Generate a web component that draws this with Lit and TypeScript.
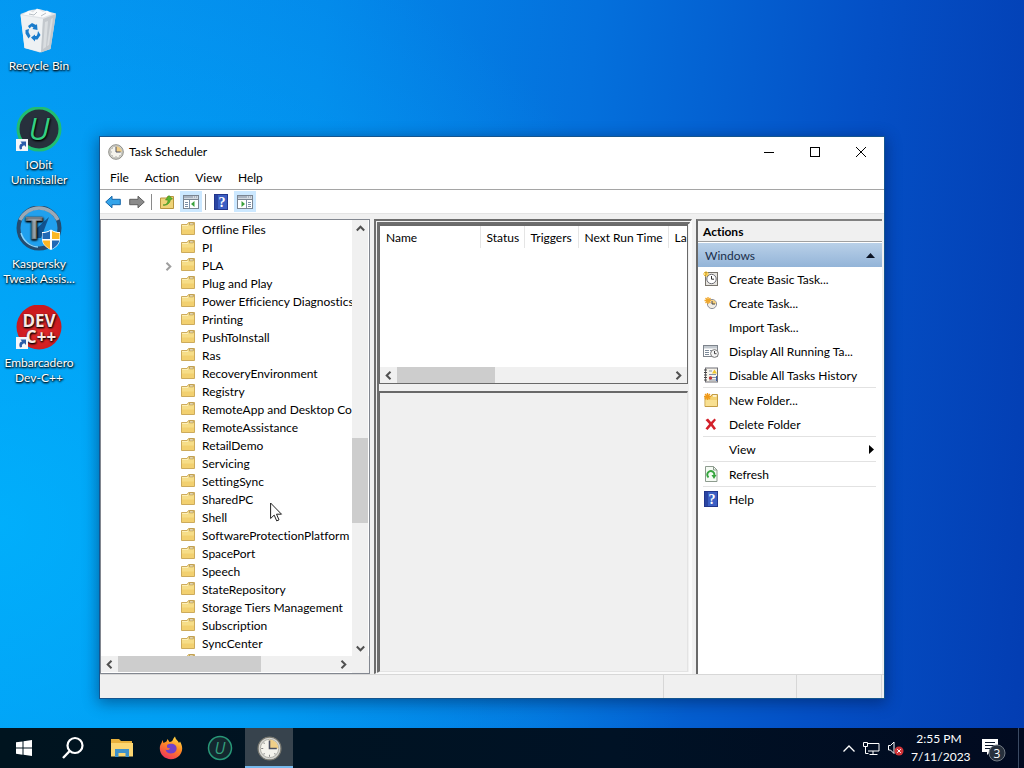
import { LitElement, html, css, svg, nothing, TemplateResult } from "lit";
import { customElement, property } from "lit/decorators.js";
import { classMap } from "lit/directives/class-map.js";

const arrow = (d: string) => html`<svg width="9" height="9" viewBox="0 0 9 9" aria-hidden="true"><path d=${d} fill="none" stroke="#505050" stroke-width="2"/></svg>`;
const LEFT = "M6.5 .8L2.7 4.5L6.5 8.2", RIGHT = "M2.5 .8L6.3 4.5L2.5 8.2", UP = "M.8 6.5L4.5 2.7L8.2 6.5", DOWN = "M.8 2.5L4.5 6.3L8.2 2.5";

const folder = (w = 16) => html`<svg width=${w} height=${w} viewBox="0 0 16 16" aria-hidden="true">
  <path d="M1.500 3.500H7l1.500-2h6v12h-13z" fill="#f6dd88" stroke="#cdab5c"/>
  <path d="M2 8.500h12V13H2z" fill="#f2d070"/><path d="M2 4.500h6" stroke="#fcefb8"/>
  <path d="M9.500 2h3.800v1.800H9.500z" fill="#fffbe8" stroke="#a98a42" stroke-width=".7"/></svg>`;

const clock = (s: number) => html`<svg width=${s} height=${s} viewBox="0 0 24 24" aria-hidden="true">
  <circle cx="12" cy="12" r="11" fill="#d4d4d0" stroke="#77776f" stroke-width="1.2"/>
  <circle cx="12" cy="12" r="8.8" fill="#f4f3ec" stroke="#a5a59c" stroke-width=".8"/>
  <path d="M12 12V3.4A8.6 8.6 0 0 1 20.6 12z" fill="#f0cf88"/>
  <path d="M12 4.2V12h7" fill="none" stroke="#4a4f60" stroke-width="1.5"/>
  <path d="M12 18v2M4 12h2M6.3 6.3l1 1M6.3 17.7l1-1M17.7 17.7l-1-1" stroke="#888" stroke-width="1"/></svg>`;

const help = html`<svg width="14" height="16" viewBox="0 0 14 16" aria-hidden="true">
  <rect x=".5" y=".5" width="13" height="15" fill="#3c5fc4" stroke="#22368c"/><path d="M1 1h3v14H1z" fill="#2a45a2"/>
  <text x="8" y="13" text-anchor="middle" font-family="Liberation Serif, serif" font-weight="bold" font-size="14" fill="#fff">?</text></svg>`;

const pane = (right: boolean) => html`<svg width="16" height="16" viewBox="0 0 16 16" aria-hidden="true">
  <rect x=".5" y="1.5" width="15" height="13" fill="#fff" stroke="#7b8592"/>
  <path d="M1 2h14v2.5H1z" fill="#a9b4c2"/><path d="M10 3h1M12 3h1M14 3h1" stroke="#fff"/>
  <path d="M1 5.5h14" stroke="#7b8592"/>
  ${right
    ? svg`<path d="M9.5 6v8M11 8.500h3M11 10.500h3M11 12.500h3" stroke="#7b8fa8"/><path d="M4.500 7l3.500 3-3.500 3z" fill="#39a13b"/>`
    : svg`<path d="M6.500 6v8M2 8.500h3M2 10.500h3M2 12.500h3" stroke="#7b8fa8"/><path d="M11.500 7L8 10l3.500 3z" fill="#39a13b"/>`}</svg>`;

const shortcut = svg`<rect x="0" y="32" width="12" height="12" fill="#f4f6fa"/>
  <path d="M4 42.500C2.500 39 4 36.800 6 36.500L4.500 34.500H10V40L8.300 38.300C6.500 38.500 5.500 40 6 42z" fill="#2a5caa"/>`;

const desktopArt: Record<string, TemplateResult> = {
  bin: html`<svg width="46" height="46" viewBox="0 0 46 46" aria-hidden="true">
    <path d="M4.500 6L15 2l8-1 17 4.500L34.500 41 24 44.500 8.500 40z" fill="#dfe3e7"/>
    <path d="M4.500 7L27 11l-2 33L8.500 40z" fill="#eef1f3"/><path d="M27 11l13-5-5.500 35L25 44.500z" fill="#c3c8cd"/>
    <path d="M29 14l3-1-2 26-3 2zM35 11l2-1-4 27-2 1z" fill="#d9dde0"/>
    <path d="M7 6.500l6-4 4 2 4-4 6 3.500 4-1.500 5 3.500-9 3.500z" fill="#fafbfc"/><path d="M13 6l5 1 3-3M25 8l5-3" stroke="#b9c0c6" fill="none"/>
    <g fill="#1b7ccc"><path d="M12 18l4-3 4 2 1-1 .5 6-5-1 1-1.500-2-1-2 2z"/><path d="M9.500 22l3.500-1-.5 3 2 4-2 2.500-3-5z"/><path d="M22 23l2.500 4-3 4.500h-2.500v2l-4-4 4-3v1.500h1.500l1-2z"/></g></svg>`,
  iobit: html`<svg width="46" height="46" viewBox="0 0 46 46" aria-hidden="true">
    <circle cx="23" cy="22" r="21" fill="#27303c"/><circle cx="23" cy="22" r="21" fill="none" stroke="#21bd72" stroke-width="3"/>
    <text x="23" y="33" text-anchor="middle" font-family="Open Sans, sans-serif" font-style="italic" font-size="31" fill="#34cf83">U</text>${shortcut}</svg>`,
  kaspersky: html`<svg width="46" height="46" viewBox="0 0 46 46" aria-hidden="true">
    <circle cx="23" cy="22" r="20.500" fill="#20a0ee" stroke="#244c70" stroke-width="4"/>
    <path d="M4 14A21 21 0 0 1 42 14" fill="none" stroke="#9aa9b6" stroke-width="3.500"/>
    <path d="M5 27A19 19 0 0 0 22 41" fill="none" stroke="#87d5ff" stroke-width="1.500"/>
    <path d="M33 11L25 32H17L21 22z" fill="#12538f"/>
    <text x="18" y="33" text-anchor="middle" font-family="Open Sans, sans-serif" font-weight="bold" font-size="30" fill="#a7b4bf" stroke="#6d7c89" stroke-width=".5">T</text>
    <path d="M35 23.500c-3 2-6 2.500-9 2.500v7c0 6 5 9 9 11 4-2 9-5 9-11v-7c-3 0-6-.5-9-2.500z" fill="#fff"/>
    <path d="M34 25v8h-7.500v-6c3 0 5-.5 7.500-2zM36 34.500h7.300c-.7 4-4 6.500-7.300 8.500z" fill="#2268b4"/>
    <path d="M36 25c2.500 1.500 5 2 7.500 2v6H36zM34 34.500v8.500c-3.300-2-6.800-4.500-7.300-8.500z" fill="#fbb725"/></svg>`,
  dev: html`<svg width="46" height="46" viewBox="0 0 46 46" aria-hidden="true">
    <defs><radialGradient id="r" cx="50%" cy="60%"><stop offset="0" stop-color="#e52b2b"/><stop offset="1" stop-color="#c91a1f"/></radialGradient></defs>
    <circle cx="23" cy="22" r="22.500" fill="url(#r)"/>
    <g font-family="Open Sans, sans-serif" font-weight="bold" font-size="17" fill="#fbe9e4" text-anchor="middle"><text x="23" y="22">DEV</text><text x="25" y="38">C++</text></g>${shortcut}</svg>`,
};

const actionArt: Record<string, TemplateResult> = {
  basic: html`<svg width="16" height="16" viewBox="0 0 16 16" aria-hidden="true"><rect x="2.500" y="1.500" width="12" height="13" fill="#e6e4df" stroke="#77736c"/>
    <circle cx="8.500" cy="8" r="4.700" fill="#fff" stroke="#6c6c75"/><path d="M8.500 5v3.200H11" fill="none" stroke="#333"/><path d="M3 0v6M0 3h6M1 1l4 4M5 1L1 5" stroke="#f1bd2d"/></svg>`,
  create: html`<svg width="16" height="16" viewBox="0 0 16 16" aria-hidden="true"><circle cx="9" cy="9" r="4.600" fill="#f2eee5" stroke="#8c8f99"/>
    <path d="M9 9V5a4 4 0 0 1 4 4z" fill="#f5cf7b"/><path d="M9 6v3h3" fill="none" stroke="#444"/><path d="M5 2v7M1.500 5.500h7M2.500 3l5 5M7.500 3l-5 5" stroke="#f0a72b" stroke-width="1.300"/></svg>`,
  display: html`<svg width="16" height="16" viewBox="0 0 16 16" aria-hidden="true"><rect x=".5" y="2.500" width="14" height="11" fill="#fff" stroke="#7d838b"/>
    <path d="M1 3h13v2.500H1z" fill="#c3c9cf"/><path d="M2 7.500h4M2 9.500h4M2 11.500h4M7 7.500h2" stroke="#7d8b9a"/><circle cx="11.500" cy="10.500" r="3.900" fill="#f5f5f5" stroke="#777"/><path d="M11.500 8v2.700h2" fill="none" stroke="#444"/></svg>`,
  history: html`<svg width="16" height="16" viewBox="0 0 16 16" aria-hidden="true"><rect x="2.500" y="1" width="12" height="14" fill="#f7f4ec" stroke="#6f6f76"/>
    <path d="M1 3h3M1 5.500h3M1 8h3M1 10.500h3M1 13h3" stroke="#444"/><path d="M6 4h3M6 7.500h7M6 10.500h7M6 13h7" stroke="#8592a3"/><path d="M11.500 2.500l2.500 4H9z" fill="#efc72c"/><circle cx="7.500" cy="11" r="1.700" fill="#c03a3a"/><path d="M13.500 9v5" stroke="#3b5faa"/></svg>`,
  folder: html`<svg width="16" height="16" viewBox="0 0 16 16" aria-hidden="true"><path d="M2 4.500h6l1-2h5.500v12H2z" fill="#f3d272" stroke="#c39c45"/><path d="M2.500 8H14v6H2.500z" fill="#f8e092"/><path d="M10 3.200h3.500v1.500H10z" fill="#fffbe8"/>
    <path d="M4.500 1v7M1 4.500h7M2 2l5 5M7 2L2 7" stroke="#f09a1a" stroke-width="1.400"/></svg>`,
  del: html`<svg width="16" height="16" viewBox="0 0 16 16" aria-hidden="true"><path d="M2.500 4l2.500-1.500 3 3.500 3.500-3.500L13 4 9.700 8l3.300 4.500-2 1.500-3-4-3.500 4L2.500 12.500 6.200 8z" fill="#d3202a"/></svg>`,
  refresh: html`<svg width="16" height="16" viewBox="0 0 16 16" aria-hidden="true"><path d="M2.500 .5h8l3.500 3.500v11.500H2.500z" fill="#f5fbf4" stroke="#8d9b8e"/><path d="M10.500 .5V4H14" fill="none" stroke="#8d9b8e"/>
    <path d="M5.500 11.500A3.600 3.600 0 1 1 11.400 9" fill="none" stroke="#36a53f" stroke-width="2"/><path d="M8.500 9h5l-2.500 4z" fill="#36a53f"/></svg>`,
  help,
};

@customElement("scroll-bar")
export class ScrollBar extends LitElement {
  @property({ type: Boolean, reflect: true }) vertical = false;
  @property({ type: Number }) start = 0;
  @property({ type: Number }) size = 50;
  static styles = css`
    :host { display: flex; background: #f0f0f0; height: 16px; min-width: 0; }
    :host([vertical]) { flex-direction: column; width: 16px; height: auto; min-height: 0; }
    button { flex: none; display: grid; place-items: center; width: 17px; height: 16px; padding: 0; border: 0; background: none; }
    .track { flex: 1; display: flex; flex-direction: inherit; min-height: 0; min-width: 0; }
    .thumb { background: #cdcdcd; flex: none; }
  `;
  render() {
    const v = this.vertical;
    const before = v ? `height:${this.start}%` : `width:${this.start}%`;
    const thumb = v ? `height:${this.size}%` : `width:${this.size}%`;
    return html`<button aria-label=${v ? "Scroll up" : "Scroll left"}>${arrow(v ? UP : LEFT)}</button>
      <div class="track"><div style=${before}></div><div class="thumb" style=${thumb}></div></div>
      <button aria-label=${v ? "Scroll down" : "Scroll right"}>${arrow(v ? DOWN : RIGHT)}</button>`;
  }
}

@customElement("task-window")
export class TaskWindow extends LitElement {
  folders = ["Offline Files", "PI", "PLA", "Plug and Play", "Power Efficiency Diagnostics", "Printing", "PushToInstall", "Ras",
    "RecoveryEnvironment", "Registry", "RemoteApp and Desktop Connections Update", "RemoteAssistance", "RetailDemo", "Servicing",
    "SettingSync", "SharedPC", "Shell", "SoftwareProtectionPlatform", "SpacePort", "Speech", "StateRepository",
    "Storage Tiers Management", "Subscription", "SyncCenter", "Sysmain"];
  groups = [
    [["basic", "Create Basic Task..."], ["create", "Create Task..."], ["", "Import Task..."], ["display", "Display All Running Ta..."], ["history", "Disable All Tasks History"]],
    [["folder", "New Folder..."], ["del", "Delete Folder"]],
    [["", "View"]],
    [["refresh", "Refresh"]],
    [["help", "Help"]],
  ];
  static styles = css`
    :host { display: flex; flex-direction: column; background: #f0f0f0; color: #000; outline: 1px solid #14558f; box-shadow: 0 3px 14px 2px rgba(0, 20, 60, .45); }
    button { font: inherit; color: inherit; border: 0; background: none; padding: 0; }
    ul { list-style: none; margin: 0; padding: 0; }
    h1, h2 { font: inherit; margin: 0; }
    .title { display: flex; align-items: center; height: 29px; background: #fff; padding-left: 8px; }
    .title h1 { flex: 1; padding-left: 5px; }
    .title button { width: 46px; height: 29px; display: grid; place-items: center; }
    .menu { display: flex; height: 23px; background: #fff; border-bottom: 1px solid #a5a5a5; padding-left: 2px; }
    .menu button { padding: 0 8px; }
    .tools { display: flex; align-items: center; gap: 2px; height: 23px; background: #fff; padding-left: 2px; border-bottom: 1px solid #e4e4e4; }
    .tools button { display: grid; place-items: center; width: 22px; height: 21px; }
    .tools button.on { background: #cce8ff; }
    .rule { width: 1px; height: 16px; background: #8a8a8a; margin: 0 2px 0 1px; }
    .body { flex: 1; min-height: 0; display: grid; grid-template-columns: 270px minmax(0, 1fr) 188px; gap: 4px; padding-top: 5px; }
    .tree { display: grid; grid-template: minmax(0, 1fr) 17px / minmax(0, 1fr) 17px; background: #fff; border: 1px solid #828790; min-height: 0; }
    .tree ul { overflow: hidden; }
    .tree li { display: flex; align-items: center; height: 18px; white-space: nowrap; padding-left: 63px; }
    .twist { flex: none; width: 16px; display: flex; padding-top: 2px; opacity: .55; }
    .tree li svg { flex: none; }
    .tree span { padding-left: 6px; }
    .corner { background: #f0f0f0; }
    .mid { display: flex; flex-direction: column; gap: 7px; min-height: 0; border-top: 5px double #6d6d6d; border-left: 5px double #6d6d6d; border-right: 3px solid #fafafa; border-bottom: 2px solid #fafafa; }
    .list { height: 157px; display: flex; flex-direction: column; background: #fff; border: 1px solid #696969; border-width: 2px 1px 1px 1px; overflow: hidden; margin-right: 1px; }
    .heads { flex: 1; overflow: hidden; }
    table { border-collapse: collapse; table-layout: fixed; width: 388px; }
    th { box-sizing: border-box; font-weight: 400; text-align: left; height: 22px; padding: 0 0 0 6px; border-right: 1px solid #e5e5e5; white-space: nowrap; overflow: hidden; }
    .c1 { width: 100px; } .c2 { width: 44px; } .c3 { width: 54px; } .c4 { width: 90px; }
    .detail { flex: 1; border-top: 2px solid #696969; border-left: 1px solid #696969; border-right: 1px solid #e3e3e3; border-bottom: 1px solid #e3e3e3; margin-right: 1px; }
    .actions { background: #fff; border-top: 2px solid #808080; border-left: 2px solid #696969; margin-right: 2px; }
    .actions h2 { font-weight: 700; background: #f0f0f0; height: 20px; line-height: 22px; padding-left: 5px; border-bottom: 1px solid #a0a0a0; }
    .group { display: flex; align-items: center; justify-content: space-between; width: 100%; height: 24px; margin-top: 1px; padding: 0 7px; background: linear-gradient(#b9d0e8, #93b4d8); color: #1b2f4b; }
    .actions ul { margin: 0 6px 0 5px; }
    .actions ul + ul { border-top: 1px solid #e2e2e2; }
    .actions li button { display: flex; align-items: center; width: 100%; height: 24px; padding-right: 2px; text-align: left; white-space: nowrap; }
    .pic { display: grid; place-items: center; width: 16px; margin-right: 10px; }
    .label { flex: 1; }
    .status { display: grid; grid-template-columns: 1fr 132px 84px; gap: 1px; height: 23px; padding-right: 2px; border-top: 1px solid #d7d7d7; }
    .status div { border-right: 1px solid #d7d7d7; }
  `;
  render() {
    return html`
      <header class="title">${clock(16)}<h1>Task Scheduler</h1>
        <button aria-label="Minimize"><svg width="12" height="12"><path d="M1 6.500h10" stroke="#000"/></svg></button>
        <button aria-label="Maximize"><svg width="12" height="12"><rect x="1.500" y="1.500" width="9" height="9" fill="none" stroke="#000"/></svg></button>
        <button aria-label="Close"><svg width="12" height="12"><path d="M1 1l10 10M11 1L1 11" stroke="#000"/></svg></button>
      </header>
      <nav class="menu">${["File", "Action", "View", "Help"].map(m => html`<button>${m}</button>`)}</nav>
      <div class="tools">
        <button aria-label="Back"><svg width="16" height="14" viewBox="0 0 16 14"><path d="M.7 7L7 1.200V4.300h8.300v5.400H7v3.100z" fill="#34a4ea" stroke="#1767a9"/></svg></button>
        <button aria-label="Forward"><svg width="16" height="14" viewBox="0 0 16 14"><path d="M15.300 7L9 1.200V4.300H.7v5.400H9v3.100z" fill="#8b8b8b" stroke="#606060"/></svg></button>
        <div class="rule"></div>
        <button aria-label="Up one level"><svg width="16" height="16" viewBox="0 0 16 16"><path d="M1.500 4h6l1-1.500h6v12h-13z" fill="#efd378" stroke="#b8943e"/><path d="M4 11c4 0 5-3 5-5H6.500L10 1.500 13.500 5l-2 .5C11 9 8 12 4 11z" fill="#5cb531" stroke="#3b8a1d" stroke-width=".6"/></svg></button>
        <button class="on" aria-label="Show console tree">${pane(false)}</button>
        <div class="rule"></div>
        <button aria-label="Help topics">${help}</button>
        <button class="on" aria-label="Show action pane">${pane(true)}</button>
      </div>
      <main class="body">
        <section class="tree">
          <ul>${this.folders.map(f => html`<li><div class="twist">${f === "PLA" ? arrow(RIGHT) : nothing}</div>${folder()}<span>${f}</span></li>`)}</ul>
          <scroll-bar vertical .start=${50} .size=${21}></scroll-bar>
          <scroll-bar .start=${0} .size=${66}></scroll-bar>
          <div class="corner"></div>
        </section>
        <section class="mid">
          <div class="list">
            <div class="heads"><table><thead><tr><th class="c1">Name</th><th class="c2">Status</th><th class="c3">Triggers</th><th class="c4">Next Run Time</th><th>Last Run Time</th></tr></thead></table></div>
            <scroll-bar .start=${0} .size=${36}></scroll-bar>
          </div>
          <div class="detail"></div>
        </section>
        <aside class="actions">
          <h2>Actions</h2>
          <button class="group">Windows<svg width="9" height="5"><path d="M4.500 0L9 5H0z" fill="#0c1424"/></svg></button>
          ${this.groups.map(g => html`<ul>${g.map(([i, t]) => html`<li><button><span class="pic">${i ? actionArt[i] : nothing}</span><span class="label">${t}</span>${t === "View" ? html`<svg width="5" height="9"><path d="M0 0L5 4.500L0 9z"/></svg>` : nothing}</button></li>`)}</ul>`)}
        </aside>
      </main>
      <footer class="status"><div></div><div></div><div></div></footer>`;
  }
}

@customElement("task-bar")
export class TaskBar extends LitElement {
  apps: [string, TemplateResult][] = [
    ["Start", html`<svg width="16" height="16"><path d="M0 2.300L6.500 1.400V7.600H0zM7.500 1.200L16 0V7.600H7.500zM0 8.500h6.500v6.200L0 13.800zM7.500 8.500H16V16l-8.500-1.200z" fill="#fff"/></svg>`],
    ["Search", html`<svg width="24" height="24"><circle cx="14" cy="9.500" r="7.500" fill="none" stroke="#fff" stroke-width="2.200"/><path d="M8.700 15L2 22" stroke="#fff" stroke-width="2.400"/></svg>`],
    ["File Explorer", html`<svg width="24" height="20" viewBox="0 0 24 20"><path d="M1 1h8l2 2h11v15H1z" fill="#e9b13c"/><path d="M1 5h22v13.500H1z" fill="#fcd671"/><path d="M5 11h14v8h-3.500v-4h-7v4H5z" fill="#3f91c9"/></svg>`],
    ["Firefox", html`<svg width="24" height="24" viewBox="0 0 24 24"><defs><linearGradient id="f" x1=".8" y1="0" x2=".3" y2="1"><stop offset="0" stop-color="#ffe14a"/><stop offset=".45" stop-color="#ff8a23"/><stop offset="1" stop-color="#f0335c"/></linearGradient></defs>
      <path d="M3.500 4l1 3 3-1.500L8.500 3l2 3c2 0 3-1 3.500-2.500C14.500 2 15.500 1 16 .5c.5 3 3 4 4 6.500l1-1.500c3 5 3 10-.5 14-4 4.500-12 5-16.500.5C-.5 15.500.5 9 2.500 7z" fill="url(#f)"/><path d="M8 9c2-1.500 7-2 9 1 2 4-1 7.500-5 7.500-3 0-5-1.500-5.500-4 2 1 4 .5 4.500-1l-3-1z" fill="#7141c8"/></svg>`],
    ["IObit Uninstaller", html`<svg width="26" height="26" viewBox="0 0 26 26"><circle cx="13" cy="13" r="11.500" fill="#13282f" stroke="#289878" stroke-width="1.500"/><text x="13" y="19" text-anchor="middle" font-family="Open Sans, sans-serif" font-style="italic" font-size="16" fill="#35a27f">U</text></svg>`],
    ["Task Scheduler", clock(25)],
  ];
  static styles = css`
    :host { display: flex; align-items: stretch; height: 40px; background: linear-gradient(90deg, #00141f, #001225 60%, #010a20); color: #fff; }
    .app { width: 48px; margin-right: 1px; padding: 0; border: 0; background: none; display: grid; place-items: center; }
    .app.active { background: #37434d; box-shadow: inset 0 -2px #76b9ed; }
    .tray { margin-left: auto; display: flex; align-items: center; gap: 7px; padding-right: 9px; border-right: 1px solid #3b4a63; margin-right: 5px; }
    .tray button { display: grid; place-items: center; padding: 0; border: 0; background: none; color: inherit; font: inherit; }
    .tray .time { text-align: center; line-height: 18px; width: 56px; display: block; white-space: nowrap; }
    .tray .note { margin-left: 7px; }
  `;
  render() {
    return html`${this.apps.map(([n, i]) => html`<button class=${classMap({ app: true, active: n === "Task Scheduler" })} aria-label=${n}>${i}</button>`)}
      <div class="tray">
        <button aria-label="Show hidden icons"><svg width="14" height="9"><path d="M1.500 7.500L7 2l5.500 5.500" fill="none" stroke="#fff" stroke-width="1.300"/></svg></button>
        <button aria-label="Network"><svg width="17" height="16"><path d="M5 3.500h11v7.500H5M10 11v3M6.500 14.500h8" fill="none" stroke="#fff"/><path d="M.5 2.500h4v4h-4zM2.500 6.500v7h3" fill="none" stroke="#fff"/></svg></button>
        <button aria-label="Volume"><svg width="17" height="16"><path d="M1.500 5.500h2l3.500-3.500v11.500l-3.500-3.500h-2z" fill="none" stroke="#fff"/><circle cx="12" cy="11" r="4.500" fill="#d13438"/><path d="M10.200 9.200l3.600 3.600M13.800 9.200l-3.600 3.600" stroke="#fff"/></svg></button>
        <button class="time">2:55 PM<br>7/11/2023</button>
        <button class="note" aria-label="Notifications"><svg width="28" height="28" viewBox="0 0 28 28"><path d="M1 5h16v13H9l-3 3v-3H1z" fill="#fff"/><path d="M4 8.500h10M4 11.500h10M4 14.500h8" stroke="#09152a"/><circle cx="16" cy="19" r="8" fill="#27303c" stroke="#727a84"/><text x="16" y="23.500" text-anchor="middle" font-family="Open Sans, sans-serif" font-size="12" fill="#fff">3</text></svg></button>
      </div>`;
  }
}

@customElement("app-root")
export class AppRoot extends LitElement {
  icons: [string, string[]][] = [["bin", ["Recycle Bin"]], ["iobit", ["IObit", "Uninstaller"]], ["kaspersky", ["Kaspersky", "Tweak Assis..."]], ["dev", ["Embarcadero", "Dev-C++"]]];
  static styles = css`
    :host { display: flex; flex-direction: column; height: 100vh; overflow: hidden; font: 12px/15px Lato, "Open Sans", sans-serif; font-variant-ligatures: none; }
    .desk { position: relative; flex: 1; min-height: 0;
      background: radial-gradient(ellipse 70% 90% at 0% 72%, rgba(0, 184, 255, .75), rgba(0, 160, 250, 0)), linear-gradient(95deg, #0493f0 0%, #0388ea 30%, #0470dc 55%, #0450c6 80%, #033db2 100%); }
    .icons { list-style: none; margin: 0; padding: 8px 0 0 1px; display: grid; grid-auto-rows: 99px; justify-content: start; grid-template-columns: 76px; }
    .icons button { width: 100%; padding: 0; border: 0; background: none; color: #fff; font: inherit; text-shadow: 0 1px 2px #000, 1px 1px 2px rgba(0, 0, 0, .8); white-space: nowrap; display: flex; flex-direction: column; align-items: center; gap: 4px; }
    task-window { position: absolute; inset: 137px 140px 30px 100px; }
    .pointer { position: absolute; left: 270px; top: 502px; }
  `;
  render() {
    return html`<div class="desk">
        <ul class="icons">${this.icons.map(([k, t]) => html`<li><button>${desktopArt[k]}<span>${t[0]}${t[1] ? html`<br>${t[1]}` : nothing}</span></button></li>`)}</ul>
        <task-window></task-window>
        <svg class="pointer" width="13" height="20" viewBox="0 0 13 20" aria-hidden="true"><path d="M.6 1v15.500l3.600-3.400 2.500 5.800 2.300-1-2.500-5.700h5z" fill="#fff" stroke="#222"/></svg>
      </div>
      <task-bar></task-bar>`;
  }
}
